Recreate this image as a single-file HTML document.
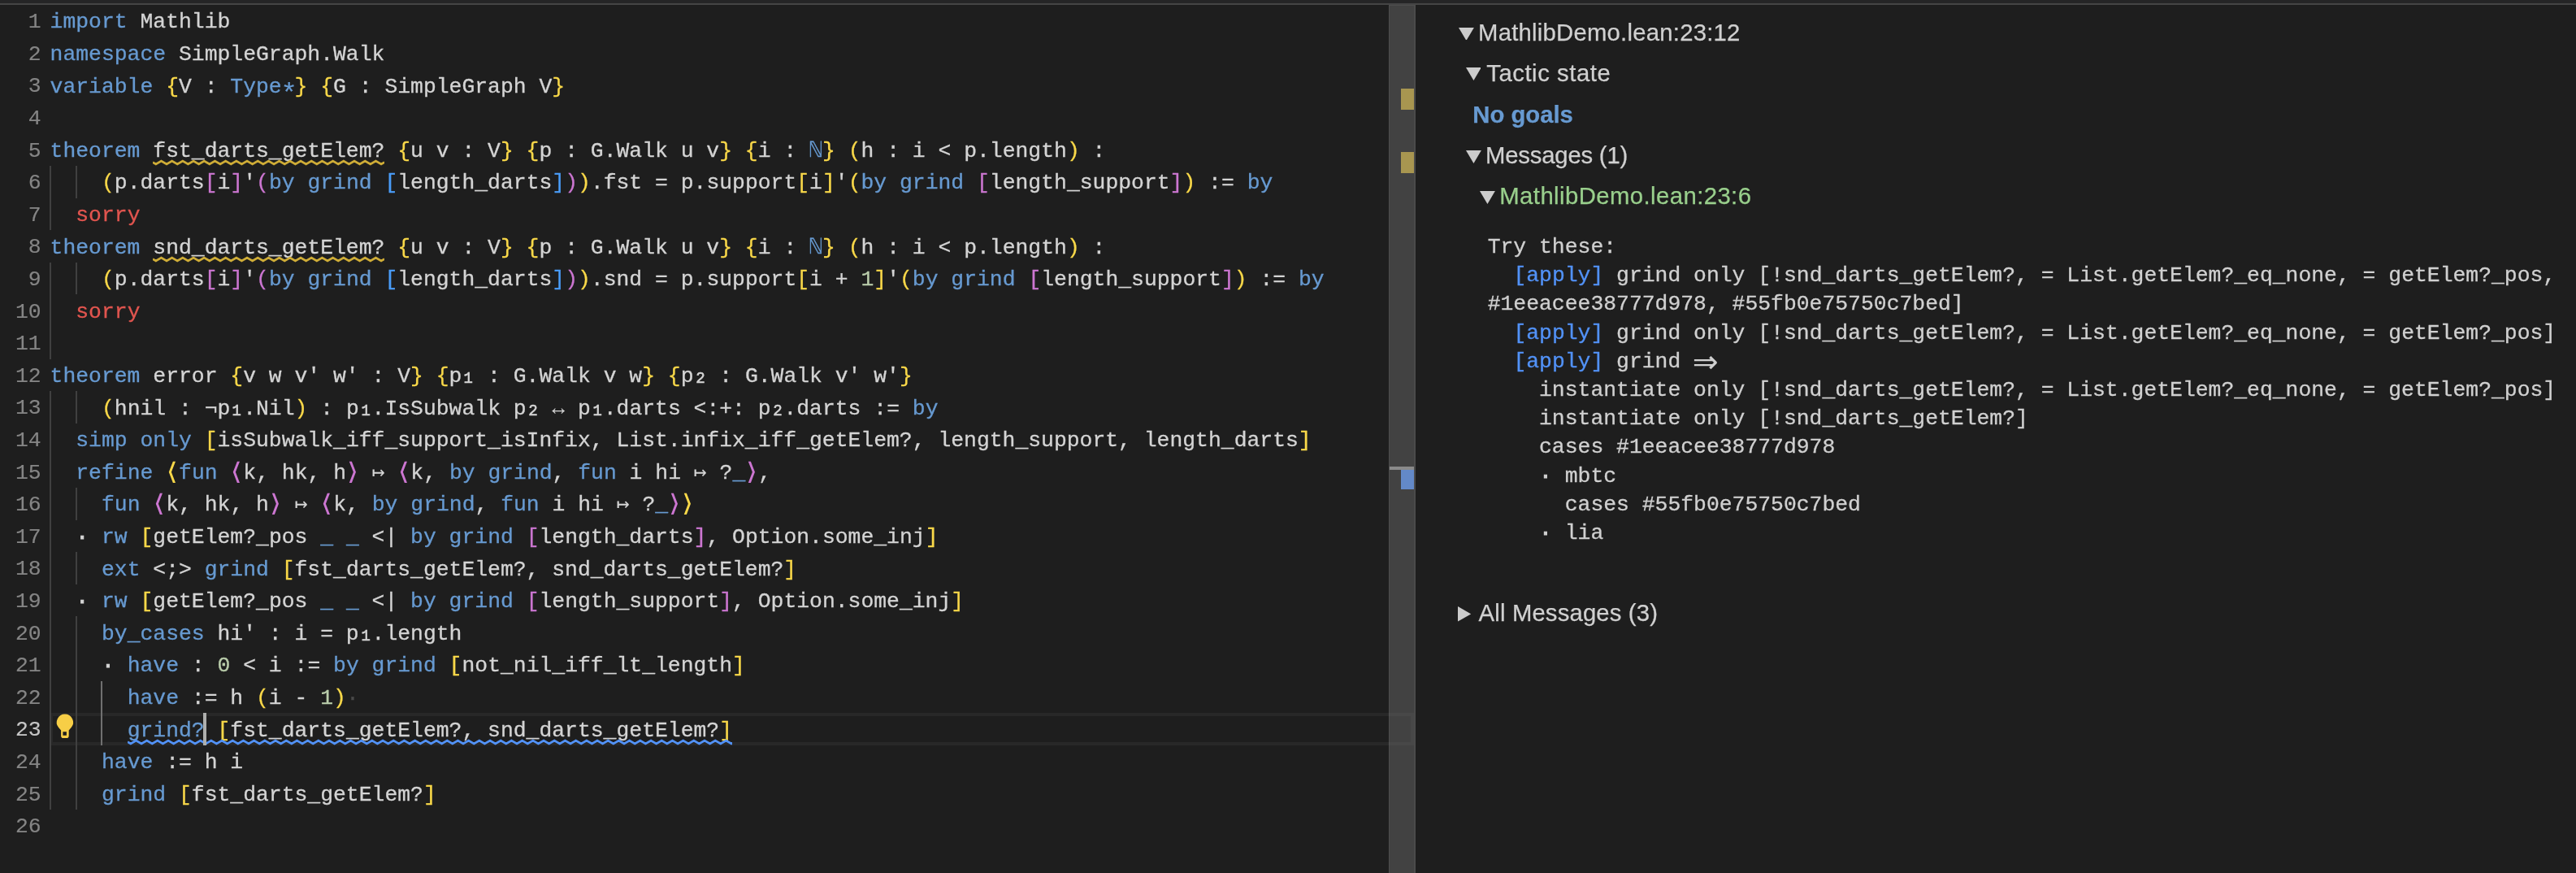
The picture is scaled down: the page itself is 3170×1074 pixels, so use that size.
<!DOCTYPE html>
<html lang="en"><head><meta charset="utf-8"><title>MathlibDemo.lean</title>
<style>
html,body{margin:0;padding:0;background:#1e1e1e;}
body{width:3170px;height:1074px;position:relative;overflow:hidden;}
.abs,.ln,.cl,.ig,.sqg,.ml,.row,.tri{position:absolute;}
.topband{left:0;top:0;width:3170px;height:4px;background:#252526;}
.topline{left:0;top:4px;width:3170px;height:2px;background:#454545;}
.mono,.ln,.cl,.ml{font-family:"Liberation Mono","DejaVu Sans Mono",monospace;font-size:26.4px;white-space:pre;font-variant-ligatures:none;-webkit-text-stroke:0.3px;}
.ln{left:0;width:50.6px;text-align:right;color:#858585;height:39.6px;line-height:39.6px;}
.ln{-webkit-text-stroke:0.15px;}
.ln.cur{color:#c6c6c6;}
.cl{left:61.6px;height:39.6px;line-height:39.6px;color:#d4d4d4;}
.k{color:#679ad1}.t{color:#d4d4d4}.r{color:#e1554f}.n{color:#bacdab}
.b1{color:#f9d849}.b2{color:#cc76d1}.b3{color:#4a9df8}.ws{color:#4a4a4a}.sq{color:#d4d4d4}
.ig{width:2.2px;height:39.6px;background:#404040;}
.ig.act{background:#707070;width:2px;}
.sans,.row{font-family:"Liberation Sans","DejaVu Sans",sans-serif;font-size:29.3px;color:#d0d0d0;white-space:pre;line-height:34px;height:34px;-webkit-text-stroke:0.25px;}
.ml{color:#d0d0d0;height:35.2px;line-height:35.2px;left:1830.7px;}
.ap{color:#5292f7}
.dot{-webkit-text-stroke:1.1px;}
.ang{display:inline-block;transform:translateY(0.9px) scale(1.4,1.12);transform-origin:50% 58%;-webkit-text-stroke:0;}
.sub{display:inline-block;transform:scale(1.2);transform-origin:50% 85%;-webkit-text-stroke:0.5px;}
.arw{-webkit-text-stroke:0;}
.ast{display:inline-block;width:15.84px;text-align:center;line-height:0;font-size:34px;position:relative;top:11px;left:-1.2px;-webkit-text-stroke:0.2px;}
.arr{position:absolute;font-family:"DejaVu Sans",sans-serif;font-size:38px;line-height:35.2px;top:0px;-webkit-text-stroke:0;}
#app{position:absolute;left:0;top:0;width:3170px;height:1074px;will-change:transform;}
</style></head><body><div id="app">
<div class="abs topband"></div><div class="abs topline"></div>
<div class="abs" style="left:63px;top:877px;width:1677px;height:40px;box-sizing:border-box;border:4px solid #282828;border-left-width:2px"></div>
<div class="ig" style="left:61.00px;top:204.00px;height:79.20px"></div><div class="ig" style="left:61.00px;top:322.80px;height:118.80px"></div><div class="ig" style="left:61.00px;top:481.20px;height:514.80px"></div><div class="ig" style="left:92.68px;top:204.00px;height:39.60px"></div><div class="ig" style="left:92.68px;top:322.80px;height:39.60px"></div><div class="ig" style="left:92.68px;top:481.20px;height:39.60px"></div><div class="ig" style="left:92.68px;top:600.00px;height:39.60px"></div><div class="ig" style="left:92.68px;top:679.20px;height:39.60px"></div><div class="ig" style="left:92.68px;top:758.40px;height:237.60px"></div><div class="ig act" style="left:124.36px;top:837.60px;height:79.20px"></div>
<div class="ln" style="top:6.00px;padding-top:2.3px">1</div><div class="cl" style="top:8.30px"><span class="k">import</span><span class="t"> Mathlib</span></div>
<div class="ln" style="top:45.60px;padding-top:2.3px">2</div><div class="cl" style="top:47.90px"><span class="k">namespace</span><span class="t"> SimpleGraph.Walk</span></div>
<div class="ln" style="top:85.20px;padding-top:2.3px">3</div><div class="cl" style="top:87.50px"><span class="k">variable</span><span class="t"> </span><span class="b1">{</span><span class="t">V : </span><span class="k">Type<span class="ast">*</span></span><span class="b1">}</span><span class="t"> </span><span class="b1">{</span><span class="t">G : SimpleGraph V</span><span class="b1">}</span></div>
<div class="ln" style="top:124.80px;padding-top:2.3px">4</div>
<div class="ln" style="top:164.40px;padding-top:2.3px">5</div><div class="cl" style="top:166.70px"><span class="k">theorem</span><span class="t"> </span><span class="sq">fst_darts_getElem?</span><span class="t"> </span><span class="b1">{</span><span class="t">u v : V</span><span class="b1">}</span><span class="t"> </span><span class="b1">{</span><span class="t">p : G.Walk u v</span><span class="b1">}</span><span class="t"> </span><span class="b1">{</span><span class="t">i : </span><span class="k">ℕ</span><span class="b1">}</span><span class="t"> </span><span class="b1">(</span><span class="t">h : i &lt; p.length</span><span class="b1">)</span><span class="t"> :</span></div>
<div class="ln" style="top:204.00px;padding-top:2.3px">6</div><div class="cl" style="top:206.30px"><span class="t">    </span><span class="b1">(</span><span class="t">p.darts</span><span class="b2">[</span><span class="t">i</span><span class="b2">]</span><span class="t">'</span><span class="b2">(</span><span class="k">by grind</span><span class="t"> </span><span class="b3">[</span><span class="t">length_darts</span><span class="b3">]</span><span class="b2">)</span><span class="b1">)</span><span class="t">.fst = p.support</span><span class="b1">[</span><span class="t">i</span><span class="b1">]</span><span class="t">'</span><span class="b1">(</span><span class="k">by grind</span><span class="t"> </span><span class="b2">[</span><span class="t">length_support</span><span class="b2">]</span><span class="b1">)</span><span class="t"> := </span><span class="k">by</span></div>
<div class="ln" style="top:243.60px;padding-top:2.3px">7</div><div class="cl" style="top:245.90px"><span class="t">  </span><span class="r">sorry</span></div>
<div class="ln" style="top:283.20px;padding-top:2.3px">8</div><div class="cl" style="top:285.50px"><span class="k">theorem</span><span class="t"> </span><span class="sq">snd_darts_getElem?</span><span class="t"> </span><span class="b1">{</span><span class="t">u v : V</span><span class="b1">}</span><span class="t"> </span><span class="b1">{</span><span class="t">p : G.Walk u v</span><span class="b1">}</span><span class="t"> </span><span class="b1">{</span><span class="t">i : </span><span class="k">ℕ</span><span class="b1">}</span><span class="t"> </span><span class="b1">(</span><span class="t">h : i &lt; p.length</span><span class="b1">)</span><span class="t"> :</span></div>
<div class="ln" style="top:322.80px;padding-top:2.3px">9</div><div class="cl" style="top:325.10px"><span class="t">    </span><span class="b1">(</span><span class="t">p.darts</span><span class="b2">[</span><span class="t">i</span><span class="b2">]</span><span class="t">'</span><span class="b2">(</span><span class="k">by grind</span><span class="t"> </span><span class="b3">[</span><span class="t">length_darts</span><span class="b3">]</span><span class="b2">)</span><span class="b1">)</span><span class="t">.snd = p.support</span><span class="b1">[</span><span class="t">i + </span><span class="n">1</span><span class="b1">]</span><span class="t">'</span><span class="b1">(</span><span class="k">by grind</span><span class="t"> </span><span class="b2">[</span><span class="t">length_support</span><span class="b2">]</span><span class="b1">)</span><span class="t"> := </span><span class="k">by</span></div>
<div class="ln" style="top:362.40px;padding-top:2.3px">10</div><div class="cl" style="top:364.70px"><span class="t">  </span><span class="r">sorry</span></div>
<div class="ln" style="top:402.00px;padding-top:2.3px">11</div>
<div class="ln" style="top:441.60px;padding-top:2.3px">12</div><div class="cl" style="top:443.90px"><span class="k">theorem</span><span class="t"> error </span><span class="b1">{</span><span class="t">v w v' w' : V</span><span class="b1">}</span><span class="t"> </span><span class="b1">{</span><span class="t">p<span class="sub">₁</span> : G.Walk v w</span><span class="b1">}</span><span class="t"> </span><span class="b1">{</span><span class="t">p<span class="sub">₂</span> : G.Walk v' w'</span><span class="b1">}</span></div>
<div class="ln" style="top:481.20px;padding-top:2.3px">13</div><div class="cl" style="top:483.50px"><span class="t">    </span><span class="b1">(</span><span class="t">hnil : ¬p<span class="sub">₁</span>.Nil</span><span class="b1">)</span><span class="t"> : p<span class="sub">₁</span>.IsSubwalk p<span class="sub">₂</span> <span class="arw">↔</span> p<span class="sub">₁</span>.darts &lt;:+: p<span class="sub">₂</span>.darts := </span><span class="k">by</span></div>
<div class="ln" style="top:520.80px;padding-top:2.3px">14</div><div class="cl" style="top:523.10px"><span class="t">  </span><span class="k">simp only</span><span class="t"> </span><span class="b1">[</span><span class="t">isSubwalk_iff_support_isInfix, List.infix_iff_getElem?, length_support, length_darts</span><span class="b1">]</span></div>
<div class="ln" style="top:560.40px;padding-top:2.3px">15</div><div class="cl" style="top:562.70px"><span class="t">  </span><span class="k">refine</span><span class="t"> </span><span class="b1"><span class="ang">⟨</span></span><span class="k">fun</span><span class="t"> </span><span class="b2"><span class="ang">⟨</span></span><span class="t">k, hk, h</span><span class="b2"><span class="ang">⟩</span></span><span class="t"> <span class="arw">↦</span> </span><span class="b2"><span class="ang">⟨</span></span><span class="t">k, </span><span class="k">by grind</span><span class="t">, </span><span class="k">fun</span><span class="t"> i hi <span class="arw">↦</span> ?</span><span class="k">_</span><span class="b2"><span class="ang">⟩</span></span><span class="t">,</span></div>
<div class="ln" style="top:600.00px;padding-top:2.3px">16</div><div class="cl" style="top:602.30px"><span class="t">    </span><span class="k">fun</span><span class="t"> </span><span class="b2"><span class="ang">⟨</span></span><span class="t">k, hk, h</span><span class="b2"><span class="ang">⟩</span></span><span class="t"> <span class="arw">↦</span> </span><span class="b2"><span class="ang">⟨</span></span><span class="t">k, </span><span class="k">by grind</span><span class="t">, </span><span class="k">fun</span><span class="t"> i hi <span class="arw">↦</span> ?</span><span class="k">_</span><span class="b2"><span class="ang">⟩</span></span><span class="b1"><span class="ang">⟩</span></span></div>
<div class="ln" style="top:639.60px;padding-top:2.3px">17</div><div class="cl" style="top:641.90px"><span class="t">  <span class="dot">·</span> </span><span class="k">rw</span><span class="t"> </span><span class="b1">[</span><span class="t">getElem?_pos </span><span class="k">_ _</span><span class="t"> &lt;| </span><span class="k">by grind</span><span class="t"> </span><span class="b2">[</span><span class="t">length_darts</span><span class="b2">]</span><span class="t">, Option.some_inj</span><span class="b1">]</span></div>
<div class="ln" style="top:679.20px;padding-top:2.3px">18</div><div class="cl" style="top:681.50px"><span class="t">    </span><span class="k">ext</span><span class="t"> &lt;;&gt; </span><span class="k">grind</span><span class="t"> </span><span class="b1">[</span><span class="t">fst_darts_getElem?, snd_darts_getElem?</span><span class="b1">]</span></div>
<div class="ln" style="top:718.80px;padding-top:2.3px">19</div><div class="cl" style="top:721.10px"><span class="t">  <span class="dot">·</span> </span><span class="k">rw</span><span class="t"> </span><span class="b1">[</span><span class="t">getElem?_pos </span><span class="k">_ _</span><span class="t"> &lt;| </span><span class="k">by grind</span><span class="t"> </span><span class="b2">[</span><span class="t">length_support</span><span class="b2">]</span><span class="t">, Option.some_inj</span><span class="b1">]</span></div>
<div class="ln" style="top:758.40px;padding-top:2.3px">20</div><div class="cl" style="top:760.70px"><span class="t">    </span><span class="k">by_cases</span><span class="t"> hi' : i = p<span class="sub">₁</span>.length</span></div>
<div class="ln" style="top:798.00px;padding-top:2.3px">21</div><div class="cl" style="top:800.30px"><span class="t">    <span class="dot">·</span> </span><span class="k">have</span><span class="t"> : </span><span class="n">0</span><span class="t"> &lt; i := </span><span class="k">by grind</span><span class="t"> </span><span class="b1">[</span><span class="t">not_nil_iff_lt_length</span><span class="b1">]</span></div>
<div class="ln" style="top:837.60px;padding-top:2.3px">22</div><div class="cl" style="top:839.90px"><span class="t">      </span><span class="k">have</span><span class="t"> := h </span><span class="b1">(</span><span class="t">i - </span><span class="n">1</span><span class="b1">)</span><span class="ws">·</span></div>
<div class="ln cur" style="top:877.20px;padding-top:2.3px">23</div><div class="cl" style="top:879.50px"><span class="t">      </span><span class="k">grind?</span><span class="t"> </span><span class="b1">[</span><span class="t">fst_darts_getElem?, snd_darts_getElem?</span><span class="b1">]</span></div>
<div class="ln" style="top:916.80px;padding-top:2.3px">24</div><div class="cl" style="top:919.10px"><span class="t">    </span><span class="k">have</span><span class="t"> := h i</span></div>
<div class="ln" style="top:956.40px;padding-top:2.3px">25</div><div class="cl" style="top:958.70px"><span class="t">    </span><span class="k">grind</span><span class="t"> </span><span class="b1">[</span><span class="t">fst_darts_getElem?</span><span class="b1">]</span></div>
<div class="ln" style="top:996.00px;padding-top:2.3px">26</div>
<svg class="sqg" style="left:188.32px;top:196.30px" width="285.12" height="8.0" viewBox="0 0 285.12 8.0"><polyline points="0.00,3.67 3.85,6.00 10.45,2.00 17.05,6.00 23.65,2.00 30.25,6.00 36.85,2.00 43.45,6.00 50.05,2.00 56.65,6.00 63.25,2.00 69.85,6.00 76.45,2.00 83.05,6.00 89.65,2.00 96.25,6.00 102.85,2.00 109.45,6.00 116.05,2.00 122.65,6.00 129.25,2.00 135.85,6.00 142.45,2.00 149.05,6.00 155.65,2.00 162.25,6.00 168.85,2.00 175.45,6.00 182.05,2.00 188.65,6.00 195.25,2.00 201.85,6.00 208.45,2.00 215.05,6.00 221.65,2.00 228.25,6.00 234.85,2.00 241.45,6.00 248.05,2.00 254.65,6.00 261.25,2.00 267.85,6.00 274.45,2.00 281.05,6.00 285.12,3.53" fill="none" stroke="#ceac37" stroke-width="2.7" stroke-linejoin="miter"/></svg><svg class="sqg" style="left:188.32px;top:315.10px" width="285.12" height="8.0" viewBox="0 0 285.12 8.0"><polyline points="0.00,3.67 3.85,6.00 10.45,2.00 17.05,6.00 23.65,2.00 30.25,6.00 36.85,2.00 43.45,6.00 50.05,2.00 56.65,6.00 63.25,2.00 69.85,6.00 76.45,2.00 83.05,6.00 89.65,2.00 96.25,6.00 102.85,2.00 109.45,6.00 116.05,2.00 122.65,6.00 129.25,2.00 135.85,6.00 142.45,2.00 149.05,6.00 155.65,2.00 162.25,6.00 168.85,2.00 175.45,6.00 182.05,2.00 188.65,6.00 195.25,2.00 201.85,6.00 208.45,2.00 215.05,6.00 221.65,2.00 228.25,6.00 234.85,2.00 241.45,6.00 248.05,2.00 254.65,6.00 261.25,2.00 267.85,6.00 274.45,2.00 281.05,6.00 285.12,3.53" fill="none" stroke="#ceac37" stroke-width="2.7" stroke-linejoin="miter"/></svg><svg class="sqg" style="left:156.64px;top:909.10px" width="744.48" height="8.0" viewBox="0 0 744.48 8.0"><polyline points="0.00,3.67 3.85,6.00 10.45,2.00 17.05,6.00 23.65,2.00 30.25,6.00 36.85,2.00 43.45,6.00 50.05,2.00 56.65,6.00 63.25,2.00 69.85,6.00 76.45,2.00 83.05,6.00 89.65,2.00 96.25,6.00 102.85,2.00 109.45,6.00 116.05,2.00 122.65,6.00 129.25,2.00 135.85,6.00 142.45,2.00 149.05,6.00 155.65,2.00 162.25,6.00 168.85,2.00 175.45,6.00 182.05,2.00 188.65,6.00 195.25,2.00 201.85,6.00 208.45,2.00 215.05,6.00 221.65,2.00 228.25,6.00 234.85,2.00 241.45,6.00 248.05,2.00 254.65,6.00 261.25,2.00 267.85,6.00 274.45,2.00 281.05,6.00 287.65,2.00 294.25,6.00 300.85,2.00 307.45,6.00 314.05,2.00 320.65,6.00 327.25,2.00 333.85,6.00 340.45,2.00 347.05,6.00 353.65,2.00 360.25,6.00 366.85,2.00 373.45,6.00 380.05,2.00 386.65,6.00 393.25,2.00 399.85,6.00 406.45,2.00 413.05,6.00 419.65,2.00 426.25,6.00 432.85,2.00 439.45,6.00 446.05,2.00 452.65,6.00 459.25,2.00 465.85,6.00 472.45,2.00 479.05,6.00 485.65,2.00 492.25,6.00 498.85,2.00 505.45,6.00 512.05,2.00 518.65,6.00 525.25,2.00 531.85,6.00 538.45,2.00 545.05,6.00 551.65,2.00 558.25,6.00 564.85,2.00 571.45,6.00 578.05,2.00 584.65,6.00 591.25,2.00 597.85,6.00 604.45,2.00 611.05,6.00 617.65,2.00 624.25,6.00 630.85,2.00 637.45,6.00 644.05,2.00 650.65,6.00 657.25,2.00 663.85,6.00 670.45,2.00 677.05,6.00 683.65,2.00 690.25,6.00 696.85,2.00 703.45,6.00 710.05,2.00 716.65,6.00 723.25,2.00 729.85,6.00 736.45,2.00 743.05,6.00 744.48,5.13" fill="none" stroke="#5292f7" stroke-width="2.7" stroke-linejoin="miter"/></svg><div class="abs" style="left:250.2px;top:877.20px;width:3.8px;height:39.6px;background:#aeafad"></div><svg class="abs" style="left:60px;top:872px" width="40" height="44" viewBox="0 0 40 44"><path fill="#f7ce46" fill-rule="evenodd" d="M19.9,6.5 A10.1,10.1 0 0 0 11.9,22.8 L15.1,26.4 V33.2 Q15.1,36 17.9,36 H21.9 Q24.7,36 24.7,33.2 V26.4 L27.9,22.8 A10.1,10.1 0 0 0 19.9,6.5 Z M17.4,28.2 H21.9 V32.7 H17.4 Z"/></svg><div class="abs" style="left:1709px;top:6px;width:33px;height:1068px;background:rgba(121,121,121,0.4);box-sizing:border-box;border-left:1.5px solid rgba(160,160,160,0.12);border-right:2.5px solid rgba(160,160,160,0.1);border-top:1px solid rgba(160,160,160,0.12)"></div><div class="abs" style="left:1724.3px;top:109px;width:15.7px;height:26px;background:#a89650"></div><div class="abs" style="left:1724.3px;top:187px;width:15.7px;height:26px;background:#a89650"></div><div class="abs" style="left:1724.3px;top:576px;width:15.7px;height:26.2px;background:#6389c8"></div><div class="abs" style="left:1710px;top:574px;width:30px;height:4px;background:#8a8a8a"></div>
<div class="row" id="r1" style="left:1819.00px;top:23.30px;letter-spacing:0.230px;">MathlibDemo.lean:23:12</div><div class="row" id="r2" style="left:1829.20px;top:73.00px;letter-spacing:0.546px;">Tactic state</div><div class="row" id="r3" style="left:1812.30px;top:124.10px;letter-spacing:-0.030px;font-weight:bold;color:#679ad1;">No goals</div><div class="row" id="r4" style="left:1828.00px;top:174.30px;letter-spacing:-0.200px;">Messages (1)</div><div class="row" id="r5" style="left:1845.30px;top:224.00px;letter-spacing:0.420px;color:#99cf8c;">MathlibDemo.lean:23:6</div><div class="row" id="r6" style="left:1819.60px;top:737.10px;letter-spacing:0.146px;">All Messages (3)</div><svg class="tri" style="left:1794.7px;top:33.6px" width="18.9" height="15.9" viewBox="0 0 18.9 15.9"><polygon points="0,0 18.9,0 9.45,15.9" fill="#cccccc"/></svg><svg class="tri" style="left:1803.6px;top:83.3px" width="18.9" height="15.9" viewBox="0 0 18.9 15.9"><polygon points="0,0 18.9,0 9.45,15.9" fill="#cccccc"/></svg><svg class="tri" style="left:1803.8px;top:184.7px" width="18.9" height="15.9" viewBox="0 0 18.9 15.9"><polygon points="0,0 18.9,0 9.45,15.9" fill="#cccccc"/></svg><svg class="tri" style="left:1820.8px;top:234.9px" width="18.9" height="15.9" viewBox="0 0 18.9 15.9"><polygon points="0,0 18.9,0 9.45,15.9" fill="#cccccc"/></svg>
<div class="ml" style="top:287.00px">Try these:</div><div class="ml" style="top:322.20px">  <span class="ap">[apply]</span> grind only [!snd_darts_getElem?, = List.getElem?_eq_none, = getElem?_pos,</div><div class="ml" style="top:357.40px">#1eeacee38777d978, #55fb0e75750c7bed]</div><div class="ml" style="top:392.60px">  <span class="ap">[apply]</span> grind only [!snd_darts_getElem?, = List.getElem?_eq_none, = getElem?_pos]</div><div class="ml" style="top:427.80px">  <span class="ap">[apply]</span> grind <span class="arr" style="left:251.94px">⇒</span></div><div class="ml" style="top:463.00px">    instantiate only [!snd_darts_getElem?, = List.getElem?_eq_none, = getElem?_pos]</div><div class="ml" style="top:498.20px">    instantiate only [!snd_darts_getElem?]</div><div class="ml" style="top:533.40px">    cases #1eeacee38777d978</div><div class="ml" style="top:568.60px">    <span class="dot">·</span> mbtc</div><div class="ml" style="top:603.80px">      cases #55fb0e75750c7bed</div><div class="ml" style="top:639.00px">    <span class="dot">·</span> lia</div>
<svg class="tri" style="left:1794.2px;top:746.2px" width="16.3" height="18.6" viewBox="0 0 16.3 18.6"><polygon points="0,0 16.3,9.30 0,18.6" fill="#cccccc"/></svg>
</div></body></html>
